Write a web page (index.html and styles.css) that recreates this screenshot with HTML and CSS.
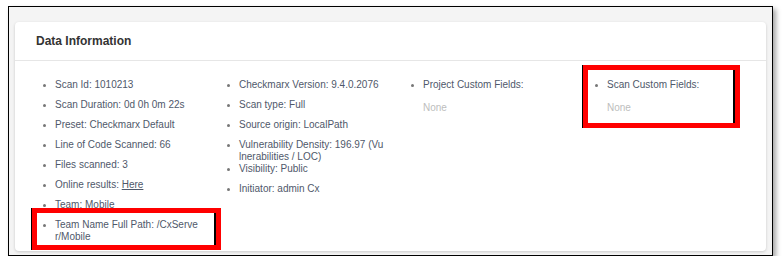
FILE: index.html
```html
<!DOCTYPE html>
<html lang="en">
  <head>
    <meta charset="UTF-8" />
    <meta name="viewport" content="width=device-width, initial-scale=1.0" />
    <title>Data Information</title>
    <link rel="stylesheet" href="styles.css">
  </head>
  <body>
    <div class="frame">
      <div class="card">
        <div class="card-head">Data Information</div>
        <div class="card-body">
          <ul class="info-col">
            <li><span>Scan Id: 1010213</span></li>
            <li><span>Scan Duration: 0d 0h 0m 22s</span></li>
            <li><span>Preset: Checkmarx Default</span></li>
            <li><span>Line of Code Scanned: 66</span></li>
            <li><span>Files scanned: 3</span></li>
            <li><span>Online results: <a href="#">Here</a></span></li>
            <li><span>Team: Mobile</span></li>
            <li><span>Team Name Full Path: /CxServer/Mobile</span></li>
          </ul>
          <ul class="info-col">
            <li><span>Checkmarx Version: 9.4.0.2076</span></li>
            <li><span>Scan type: Full</span></li>
            <li><span>Source origin: LocalPath</span></li>
            <li><span>Vulnerability Density: 196.97 (Vulnerabilities / LOC)</span></li>
            <li><span>Visibility: Public</span></li>
            <li><span>Initiator: admin Cx</span></li>
          </ul>
          <div class="info-col">
            <ul>
              <li><span>Project Custom Fields:</span></li>
            </ul>
            <div class="none">None</div>
          </div>
          <div class="info-col">
            <ul>
              <li><span>Scan Custom Fields:</span></li>
            </ul>
            <div class="none">None</div>
          </div>
        </div>
      </div>
    </div>
    <!-- annotation boxes -->
    <div class="mark mark-team"></div>
    <div class="mark mark-scan"></div>
  </body>
</html>
```

FILE: styles.css
```css
body {
  margin: 0;
  background-color: #fff;
  font-family: "Liberation Sans", Arial, sans-serif;
}
.frame {
  margin: 6px 0 0 8px;
  width: 765px;
  height: 250px;
  border: 1px solid #000;
  background-color: #f4f4f4;
  padding: 15px 6px 0 6px;
  box-sizing: border-box;
  box-shadow: 3px 3px 5px rgba(0, 0, 0, 0.35);
}
.card {
  background-color: #fff;
  border-radius: 4px;
  box-shadow: 0 1px 3px rgba(0, 0, 0, 0.18);
  height: 229px;
}
.card-head {
  height: 38px;
  line-height: 38px;
  padding-left: 21px;
  font-size: 12px;
  font-weight: 700;
  color: #333;
  border-bottom: 1px solid #e6e6e6;
}
.card-body {
  display: grid;
  grid-template-columns: repeat(4, 184px);
  padding: 18px 0 0 28px;
}
.info-col,
.info-col ul {
  list-style: none;
  margin: 0;
  padding: 0;
}
.info-col li {
  display: grid;
  grid-template-columns: 12px 145px;
  min-height: 20px;
  font-size: 10px;
  line-height: 12px;
  color: #4f586a;
  word-break: break-all;
}
.info-col li::before {
  content: "";
  width: 3px;
  height: 3px;
  margin-top: 5px;
  border-radius: 50%;
  background-color: #777;
}
.info-col a {
  color: #4f586a;
}
.none {
  margin: 3px 0 0 12px;
  font-size: 10px;
  line-height: 12px;
  color: #bdbdbd;
}
.mark {
  position: absolute;
  border: 5px solid #f00;
  box-shadow: -1px 0 0 #000, inset -2px 0 0 #000;
}
.mark-team {
  left: 32px;
  top: 208px;
  width: 179px;
  height: 32px;
}
.mark-scan {
  left: 583px;
  top: 65px;
  width: 147px;
  height: 53px;
}
```
